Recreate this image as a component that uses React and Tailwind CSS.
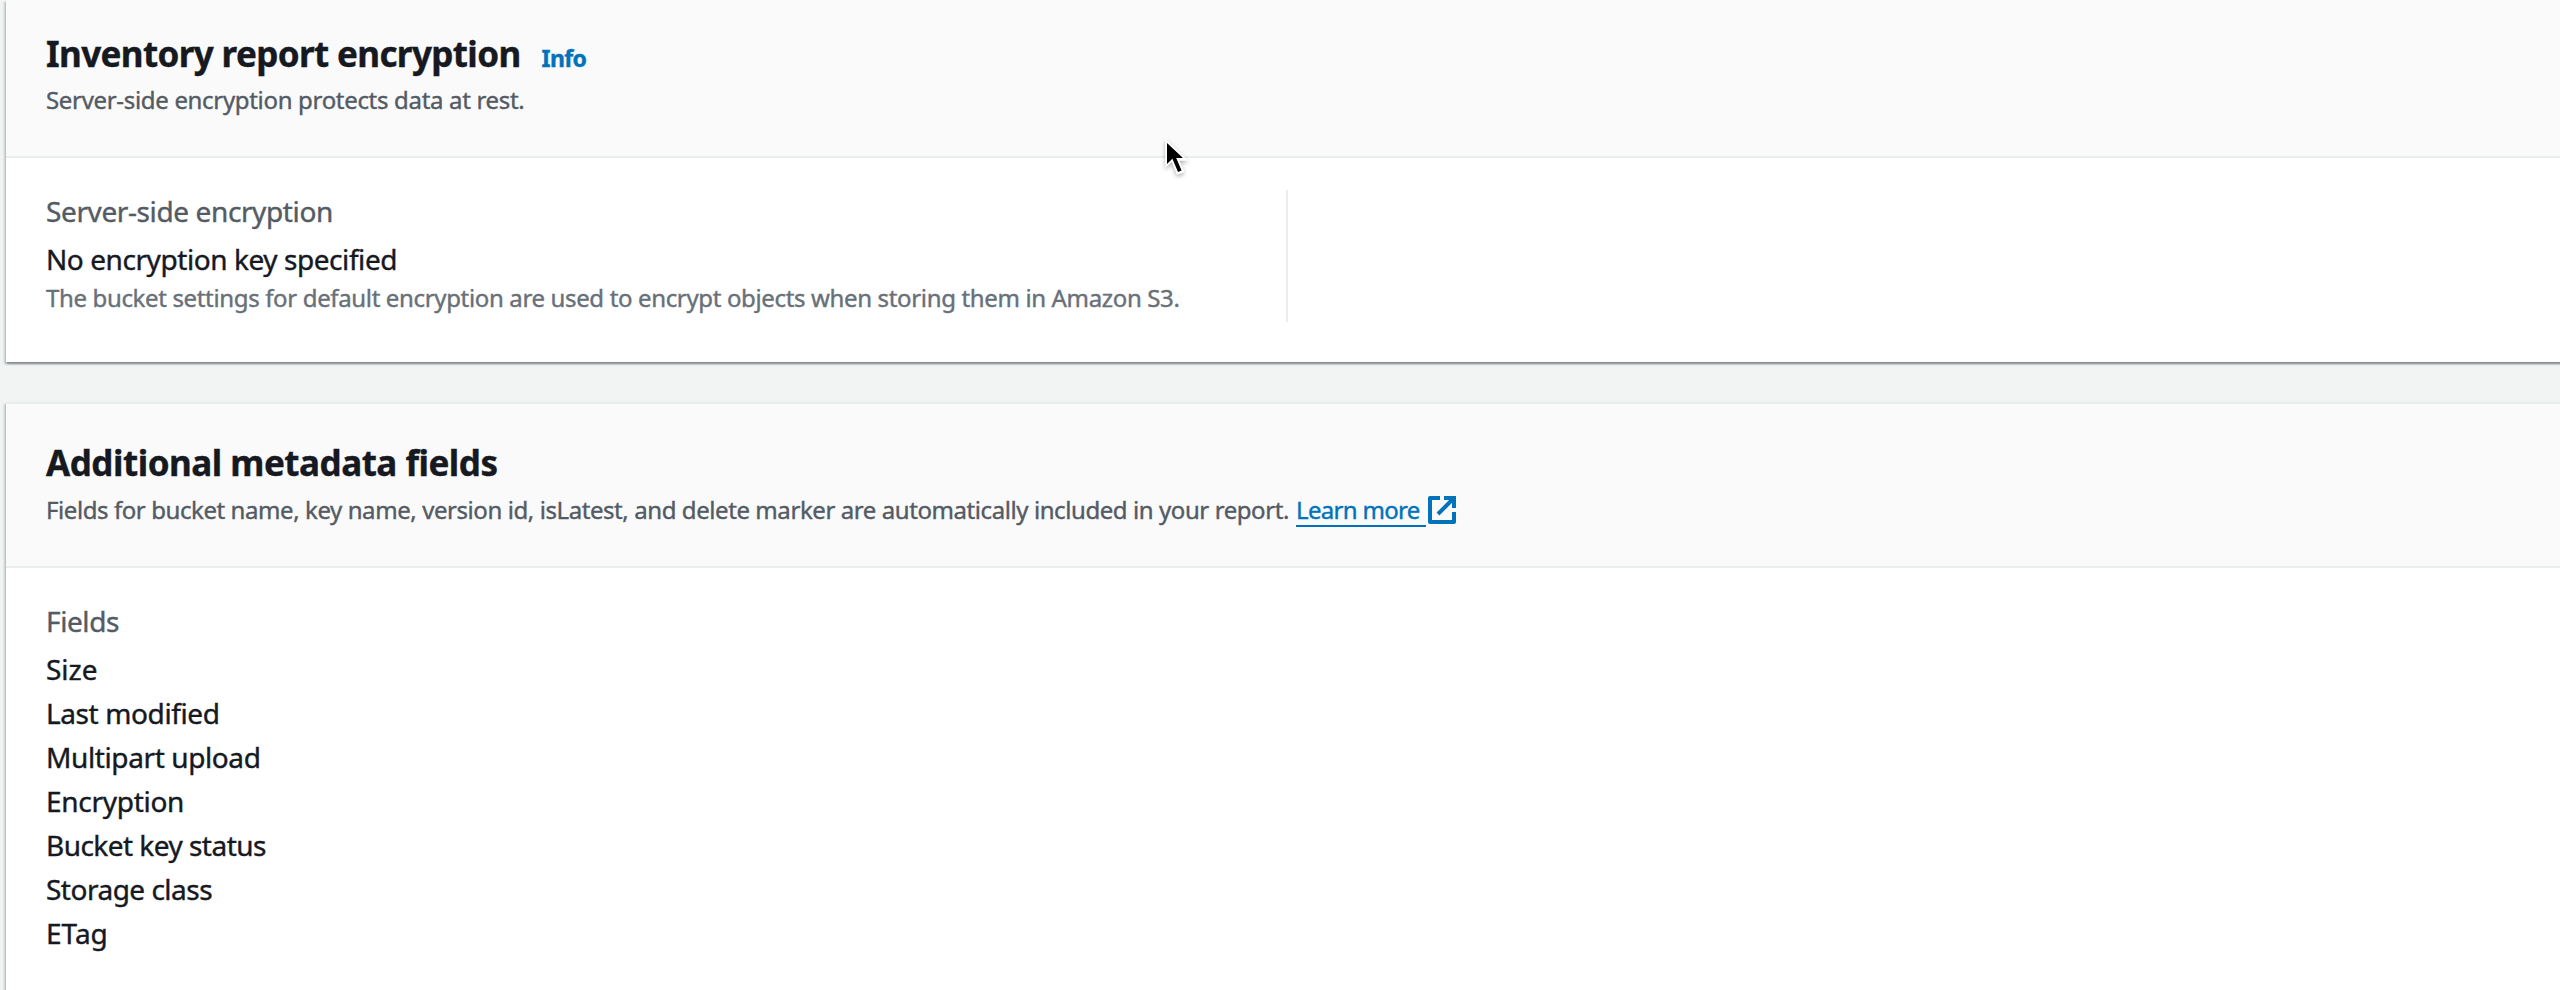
const fields = [
  { label: "Size", tracking: "" },
  { label: "Last modified", tracking: "tracking-[-0.39px]" },
  { label: "Multipart upload", tracking: "tracking-[-0.39px]" },
  { label: "Encryption", tracking: "tracking-[-0.29px]" },
  { label: "Bucket key status", tracking: "tracking-[-0.53px]" },
  { label: "Storage class", tracking: "tracking-[-0.5px]" },
  { label: "ETag", tracking: "" },
];

function Card({ className = "", children }) {
  return (
    <section
      className={
        "w-[2560px] bg-white shadow-[0_2px_2px_0_rgba(0,28,36,0.3),2px_2px_2px_0_rgba(0,28,36,0.15),-2px_2px_2px_0_rgba(0,28,36,0.15)] " +
        className
      }
    >
      {children}
    </section>
  );
}

function ExternalIcon() {
  return (
    <svg className="ml-0.5 mt-1 size-7 shrink-0" viewBox="0 0 28 28" fill="none" stroke="#0073bb" strokeWidth="4">
      <path d="M12 2H2v24h24V16" strokeLinejoin="round" />
      <path d="M16 2h10v10M10 18 25.5 2.5" />
    </svg>
  );
}

function Cursor() {
  return (
    <svg
      className="absolute left-[1164px] top-[137px] h-[42px] w-[28px] drop-shadow-[0_2px_2px_rgba(0,0,0,0.3)]"
      viewBox="0 0 28 42"
    >
      <path d="M1.2 1.5V30.8l6.6-6 5.2 13.2 7.4-3-5-11.2h8.9z" fill="#fff" />
      <path d="M3 6V27l5.4-5.2 5.6 13.2 3.6-1.6L12.2 21H19z" fill="#000" />
    </svg>
  );
}

export default function App() {
  return (
    <div className="relative h-[990px] w-[2560px] overflow-hidden bg-[#f2f3f3] pl-1.5 font-['Noto_Sans','Open_Sans',sans-serif] text-[#16191f] [-webkit-text-stroke:0.4px_currentColor]">
      <Card className="h-[362px]">
        <header className="h-[158px] border-b-2 border-[#eaeded] bg-[#fafafa] px-10 pt-8">
          <div className="flex items-baseline">
            <h2 className="text-[35px] leading-[44px] font-bold tracking-[-0.62px]">Inventory report encryption</h2>
            <a className="ml-[21px] text-[23px] leading-[36px] font-bold tracking-[-0.6px] text-[#0073bb]">Info</a>
          </div>
          <p className="mt-1.5 text-[24px] leading-[36px] tracking-[-0.32px] text-[#545b64]">
            Server-side encryption protects data at rest.
          </p>
        </header>
        <div className="px-10 pt-8">
          <div className="h-[132px] w-[1242px] border-r-2 border-[#eaeded]">
            <div className="text-[28px] leading-[42px] tracking-[-0.39px] text-[#545b64]">Server-side encryption</div>
            <div className="mt-1.5 text-[28px] leading-[42px] tracking-[-0.43px]">No encryption key specified</div>
            <div className="text-[24px] leading-[36px] tracking-[-0.35px] text-[#687078]">
              The bucket settings for default encryption are used to encrypt objects when storing them in Amazon S3.
            </div>
          </div>
        </div>
      </Card>

      <Card className="mt-10 h-[640px] border-t-2 border-[#eaeded]">
        <header className="h-[164px] border-b-2 border-[#eaeded] bg-[#fafafa] px-10 pt-[37px]">
          <h2 className="text-[35px] leading-[44px] font-bold tracking-[-0.49px]">Additional metadata fields</h2>
          <div className="mt-[7px] flex text-[24px] leading-[36px]">
            <p className="w-[1250px] whitespace-nowrap tracking-[-0.42px] text-[#545b64]">
              Fields for bucket name, key name, version id, isLatest, and delete marker are automatically included in your
              report.
            </p>
            <a className="flex text-[#0073bb]">
              <span className="h-[35px] w-[130px] border-b-2 border-[#0073bb] tracking-[-0.68px]">Learn more</span>
              <ExternalIcon />
            </a>
          </div>
        </header>
        <div className="px-10 pt-8 text-[28px]">
          <div className="leading-[42px] tracking-[-0.4px] text-[#545b64]">Fields</div>
          <ul className="mt-[5px] leading-[44px]">
            {fields.map((f) => (
              <li key={f.label} className={f.tracking}>
                {f.label}
              </li>
            ))}
          </ul>
        </div>
      </Card>
      <Cursor />
    </div>
  );
}
